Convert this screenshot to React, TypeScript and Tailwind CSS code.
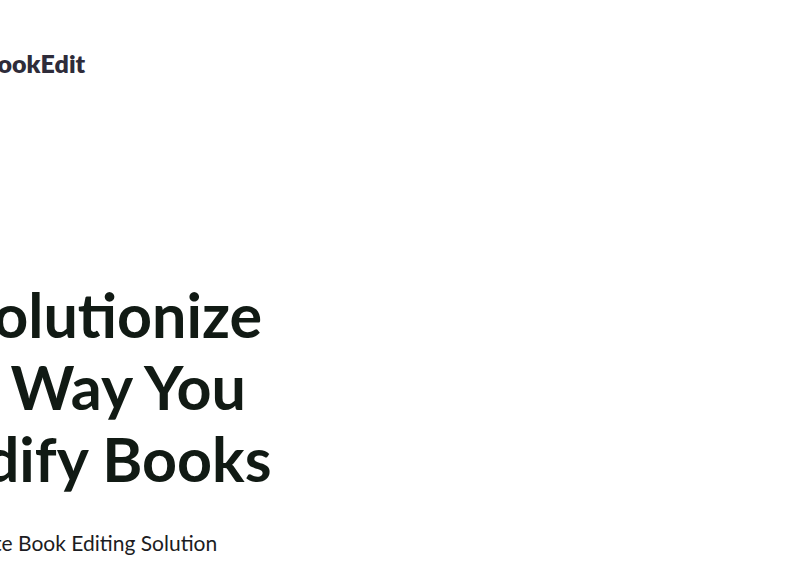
export default function App() {
  return (
    <div className="min-h-screen bg-white overflow-hidden flex justify-center">
      <div className="w-[1014px] shrink-0 font-['Lato',sans-serif]">
        {/* Header: logo mark sits off-screen on the left at this viewport */}
        <header className="flex items-center gap-2 pt-[47px]">
          <svg viewBox="0 0 80 32" className="w-20 h-8" fill="none">
            <rect x="44" y="4" width="24" height="24" rx="4" fill="#2e2c3a" />
          </svg>
          <span className="text-[25px] leading-8 font-extrabold text-[#2e2c3a]">BookEdit</span>
        </header>

        {/* Hero copy */}
        <main className="pt-[200px]">
          <h1 className="text-[61px] leading-[72px] font-bold text-[#111a14]">
            Revolutionize
            <br />
            The Way You
            <br />
            Modify Books
          </h1>
          <p className="mt-[34px] text-[21px] leading-7 text-[#1c1c22]">The Ultimate Book Editing Solution</p>
        </main>
      </div>
    </div>
  );
}
